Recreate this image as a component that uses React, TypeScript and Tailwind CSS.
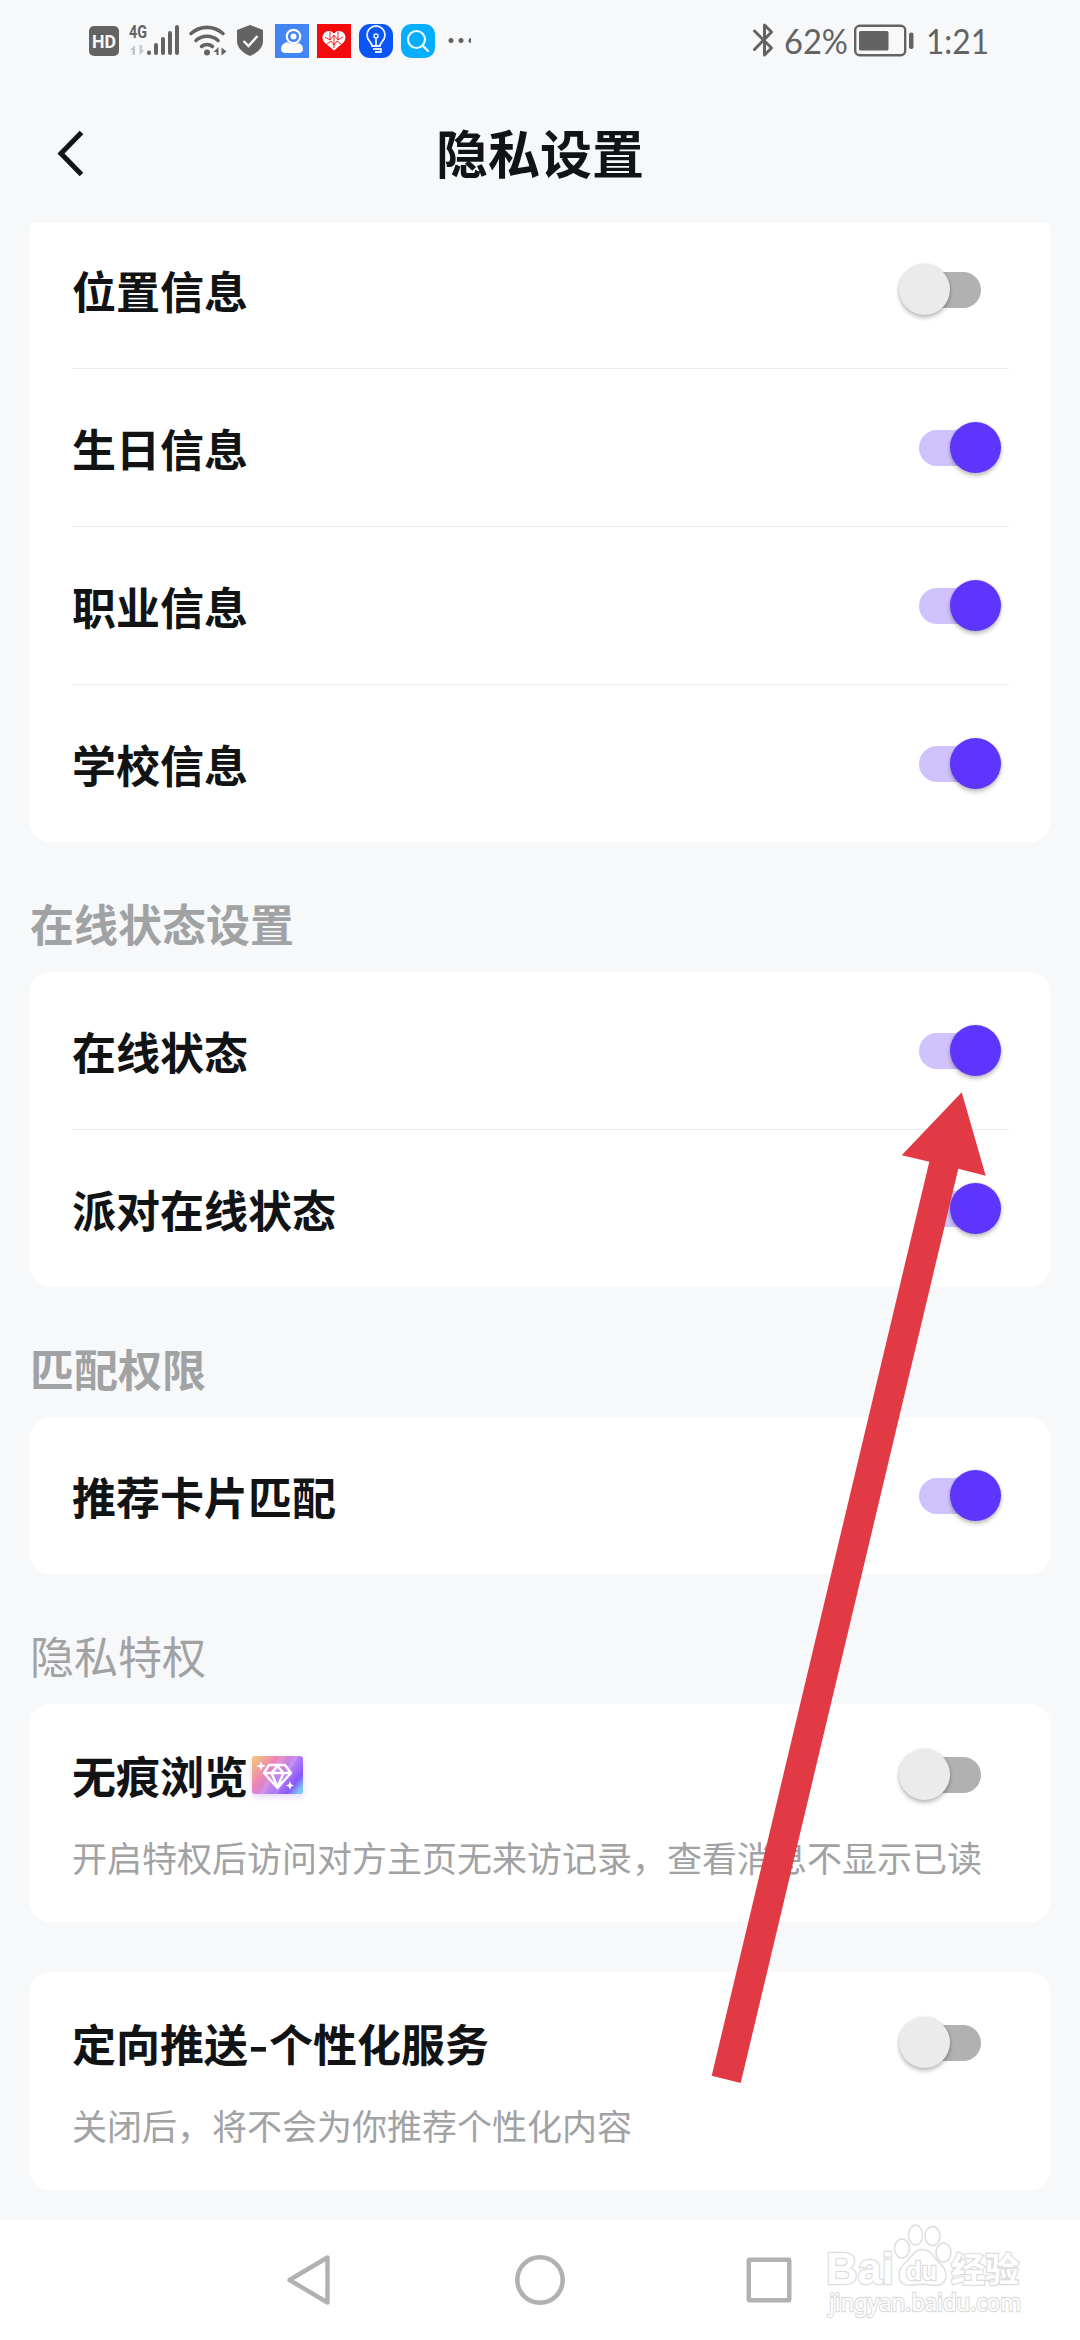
import { clsx } from 'clsx';

const profileItems = [
    { title: '位置信息', on: false },
    { title: '生日信息', on: true },
    { title: '职业信息', on: true },
    { title: '学校信息', on: true },
];

const onlineItems = [
    { title: '在线状态', on: true },
    { title: '派对在线状态', on: true },
];

const matchItems = [{ title: '推荐卡片匹配', on: true }];

function Toggle({ on }: { on: boolean }) {
    return (
        <div className="relative flex h-[51px] w-[102px] shrink-0 items-center justify-center">
            <div className={clsx('h-9 w-[62px] rounded-full', on ? 'bg-[#cfc2fd]' : 'bg-[#b1b1b1]')} />
            <div
                className={clsx(
                    'absolute top-0 size-[51px] rounded-full shadow-[0_3px_4px_rgba(0,0,0,0.24),0_0_3px_rgba(0,0,0,0.12)]',
                    on ? 'right-0 bg-[#5e35fc]' : 'left-0 bg-[#ebebeb]'
                )}
            />
        </div>
    );
}

function SettingList({ items }: { items: { title: string; on: boolean }[] }) {
    return (
        <div className="rounded-[20px] bg-white pr-[41px] pl-[42px]">
            {items.map((item, index) => (
                <div key={item.title}>
                    <div className="flex h-[157px] items-center justify-between pr-2">
                        <span className="text-[44px] leading-none font-bold">{item.title}</span>
                        <Toggle on={item.on} />
                    </div>
                    {index < items.length - 1 && <div className="h-px bg-[#ebebeb]" />}
                </div>
            ))}
        </div>
    );
}

function SectionTitle({ title, light = false }: { title: string; light?: boolean }) {
    return (
        <h2 className={clsx('flex h-[130px] items-center pt-8 text-[44px] leading-none text-[#a1a2a4]', !light && 'font-bold')}>
            {title}
        </h2>
    );
}

function DetailCard({ title, description, badge = false }: { title: string; description: string; badge?: boolean }) {
    const [name, suffix] = title.split('-');

    return (
        <div className="h-[218px] rounded-[20px] bg-white pt-[45px] pr-[49px] pl-[42px]">
            <div className="flex h-[51px] items-center justify-between">
                <div className="flex items-center gap-1">
                    <span className="text-[44px] leading-none font-bold">
                        {name}
                        {suffix && <span className="inline-block w-[21px] origin-center scale-x-125 text-center">-</span>}
                        {suffix}
                    </span>
                    {badge && <GemBadge />}
                </div>
                <Toggle on={false} />
            </div>
            <p className="mt-[39px] text-[35px] leading-none whitespace-nowrap text-[#a1a2a4]">{description}</p>
        </div>
    );
}

function GemBadge() {
    return (
        <svg width="51" height="38" viewBox="0 0 51 38" className="overflow-visible drop-shadow-[0_3px_3px_rgba(150,90,255,0.25)]">
            <defs>
                <linearGradient id="gem" x1="0" y1="0.2" x2="1" y2="0.8">
                    <stop offset="0" stopColor="#f3bd84" />
                    <stop offset="0.28" stopColor="#ef86b4" />
                    <stop offset="0.58" stopColor="#b983f5" />
                    <stop offset="0.85" stopColor="#8758fb" />
                    <stop offset="1" stopColor="#7fc4f6" />
                </linearGradient>
            </defs>
            <rect width="51" height="38" rx="3" fill="url(#gem)" />
            <path d="M28 0h6L12 38H7zM42 0h4L25 38h-3z" fill="#fff" opacity="0.12" />
            <path d="M17 9h16l6 8-13.500 15L12 17zM12 17h27M19.500 17l6 14 6-14-6-7z" fill="none" stroke="#fff" strokeWidth="2.4" strokeLinejoin="round" />
            <path d="M9 5l1.300 3.700L14 10l-3.700 1.300L9 15l-1.300-3.700L4 10l3.700-1.300zM38 25l1.200 3.300L42 29.500l-2.800 1.200L38 34l-1.200-3.300L34 29.500l2.800-1.200z" fill="#fff" />
        </svg>
    );
}

function StatusBar() {
    return (
        <div className="flex h-20 items-start justify-between">
            <svg width="490" height="80" viewBox="0 0 490 80" fill="none">
                <rect x="89" y="26" width="30" height="30" rx="5" fill="#636363" />
                <text x="92" y="48" textLength="24" lengthAdjust="spacingAndGlyphs" fontSize="18" fontWeight="700" fontFamily="Roboto, sans-serif" fill="#f7f8fa">HD</text>
                <text x="129" y="38" textLength="18" lengthAdjust="spacingAndGlyphs" fontSize="18" fontWeight="700" fontFamily="Roboto, sans-serif" fill="#636363">4G</text>
                <path d="M130 50l5-5v10h-2.500v-5zM144.500 50l-5 5v-10h2.500v5z" fill="#c4c5c6" />
                <path d="M149 52.500v.5M156 45v8M163 39v14M170 33v20M177 27v26" stroke="#636363" strokeWidth="4" strokeLinecap="round" />
                <path d="M191 33.500a24 24 0 0 1 32 0M196 40.500a16.500 16.500 0 0 1 22 0M201.500 46.500a9 9 0 0 1 11 0" stroke="#636363" strokeWidth="3.6" strokeLinecap="round" />
                <circle cx="207" cy="52.5" r="3" fill="#636363" />
                <path d="M213.500 52l5-5v8h-2v-3zM226.500 51.500l-5 4v-8z" fill="#636363" />
                <path d="M250 25l13 5v11c0 7-6 12-13 15-7-3-13-8-13-15V30z" fill="#636363" />
                <path d="M243.500 41l5 5 9-10" stroke="#f7f8fa" strokeWidth="2.4" />

                <rect x="275" y="24" width="34" height="34" fill="#4286f5" />
                <circle cx="293.5" cy="36.5" r="6.7" stroke="#fff" strokeWidth="2.2" />
                <circle cx="293.5" cy="36.5" r="3" fill="#fff" />
                <path d="M287 42q5 4 12 1q4 2 4 6q0 4-5 4h-12q-5 0-5-4q0-5 6-7z" fill="#fff" />

                <rect x="317" y="24" width="34" height="34" fill="#f20a0d" />
                <path d="M334 50.500l-9.500-8c-6-7 3-16 9.500-9 6.500-7 15.500 2 9.500 9z" fill="#fff" />
                <path d="M325 37l5 3 4-5 4 5 5-3M327 44l4-3 3 4 3-4 4 3M330 32v8M338 32v8M334 36v12" stroke="#f20a0d" strokeWidth="0.9" />

                <rect x="359" y="24" width="34" height="34" rx="11" fill="#0b55f5" />
                <path d="M372 46c0-4-5-5-5-11a9 9 0 0 1 18 0c0 6-5 7-5 11zM373 49h8v3h-6M376 38.500V46" stroke="#e8f2ff" strokeWidth="1.8" strokeLinejoin="round" />
                <circle cx="376" cy="36" r="2" stroke="#e8f2ff" strokeWidth="1.5" />

                <rect x="401" y="24" width="34" height="34" rx="10" fill="#05aeff" />
                <circle cx="416.5" cy="39.5" r="8.5" stroke="#eefaff" strokeWidth="2.2" />
                <path d="M422.500 45.500l5.500 5.500" stroke="#eefaff" strokeWidth="2.4" strokeLinecap="round" />

                <circle cx="451" cy="40.5" r="2.5" fill="#636363" />
                <circle cx="461" cy="40.5" r="2.5" fill="#636363" />
                <path d="M471 38v5a2.500 2.500 0 0 1 0-5z" fill="#636363" />
            </svg>
            <svg width="360" height="80" viewBox="720 0 360 80" fill="none">
                <path d="M754.500 31l17 17-7 7V25l7 7-17 17.500" stroke="#636363" strokeWidth="3" strokeLinejoin="round" strokeLinecap="round" />
                <text x="784" y="54" textLength="64" lengthAdjust="spacingAndGlyphs" fontSize="35" fontFamily="Lato, sans-serif" fill="#636363">62%</text>
                <rect x="855.2" y="25.7" width="50" height="29.6" rx="4.5" stroke="#636363" strokeWidth="2.4" />
                <rect x="859" y="31" width="29.5" height="19.5" rx="1.5" fill="#636363" />
                <rect x="909" y="32.5" width="4.5" height="16.5" rx="2" fill="#636363" />
                <text x="926" y="54" textLength="63" lengthAdjust="spacingAndGlyphs" fontSize="35" fontFamily="Lato, sans-serif" fill="#636363">1:21</text>
            </svg>
        </div>
    );
}

function Header() {
    return (
        <header className="grid h-[143px] grid-cols-[1fr_auto_1fr] items-center">
            <svg width="90" height="60" viewBox="0 0 90 60" fill="none">
                <path d="M81.500 10.500L61 31.500l20.500 21" stroke="#111315" strokeWidth="5" />
            </svg>
            <h1 className="pt-px text-[52px] leading-none font-bold">隐私设置</h1>
        </header>
    );
}

function NavBar() {
    return (
        <nav className="flex h-[120px] items-center bg-white">
            <svg width="1080" height="120" viewBox="0 0 1080 120" fill="none" stroke="#b1b1b1" strokeLinejoin="round">
                <path d="M289.500 60L327.500 37.500v45z" strokeWidth="4.4" />
                <circle cx="540" cy="60" r="22.7" strokeWidth="4.5" />
                <rect x="748.8" y="39.8" width="40.5" height="40.5" rx="1" strokeWidth="4.4" />
            </svg>
        </nav>
    );
}

function Watermark() {
    return (
        <svg className="absolute top-[2220px] left-[820px]" width="220" height="110" viewBox="820 2220 220 110" fill="#fff" stroke="#dcdcdc" strokeWidth="1.4">
            <g fontWeight="700" paintOrder="stroke" strokeWidth="2.4">
                <text x="826" y="2284" fontSize="44" textLength="68" lengthAdjust="spacingAndGlyphs" fontFamily="'Liberation Sans', sans-serif">Bai</text>
                <text x="951" y="2282" fontSize="34" textLength="68" lengthAdjust="spacingAndGlyphs" fontFamily="'Noto Sans CJK SC', sans-serif">经验</text>
            </g>
            <ellipse cx="902" cy="2248.5" rx="7.5" ry="9.5" />
            <ellipse cx="915.5" cy="2235" rx="7" ry="10" />
            <ellipse cx="932.5" cy="2236" rx="7.5" ry="9.5" />
            <ellipse cx="943.5" cy="2252.5" rx="7.5" ry="9.5" />
            <path d="M922 2249.500c8 0 11 6 15 11 5 5 10 9 9 16-1 8-8 10-15 8.500-6-1-12-1-18 0-7 1-13-1-14-8-1-8 4-12 8-16 5-5 8-11.500 15-11.500z" />
            <text x="906" y="2280" fontSize="26" textLength="31" lengthAdjust="spacingAndGlyphs" fontFamily="'Liberation Sans', sans-serif" fontWeight="700" paintOrder="stroke" strokeWidth="2.4">du</text>
            <text x="829" y="2311" fontSize="24" textLength="192" lengthAdjust="spacingAndGlyphs" fontFamily="'Noto Sans', sans-serif" paintOrder="stroke" strokeWidth="2.4">jingyan.baidu.com</text>
        </svg>
    );
}

export default function App() {
    return (
        <div className="relative flex h-[2340px] w-[1080px] flex-col overflow-hidden bg-[#f7f8fa] font-['Noto_Sans_CJK_SC',sans-serif] text-[#111315]">
            <StatusBar />
            <Header />
            <main className="flex-1 overflow-hidden px-[30px]">
                {/* list is scrolled slightly under the header */}
                <div className="-mt-3">
                    <SettingList items={profileItems} />
                    <SectionTitle title="在线状态设置" />
                    <SettingList items={onlineItems} />
                    <SectionTitle title="匹配权限" />
                    <SettingList items={matchItems} />
                    <SectionTitle title="隐私特权" light />
                    <div className="flex flex-col gap-[50px]">
                        <DetailCard title="无痕浏览" description="开启特权后访问对方主页无来访记录，查看消息不显示已读" badge />
                        <DetailCard title="定向推送-个性化服务" description="关闭后，将不会为你推荐个性化内容" />
                    </div>
                </div>
            </main>
            <NavBar />
            <svg className="absolute inset-0" width="1080" height="2340" viewBox="0 0 1080 2340">
                <path d="M961.700 1092.300L901.700 1155.300l27.600 6.400-217.600 914 29 7.300 217.600-914.300 27.400 7z" fill="#e23a45" />
            </svg>
            <Watermark />
        </div>
    );
}
